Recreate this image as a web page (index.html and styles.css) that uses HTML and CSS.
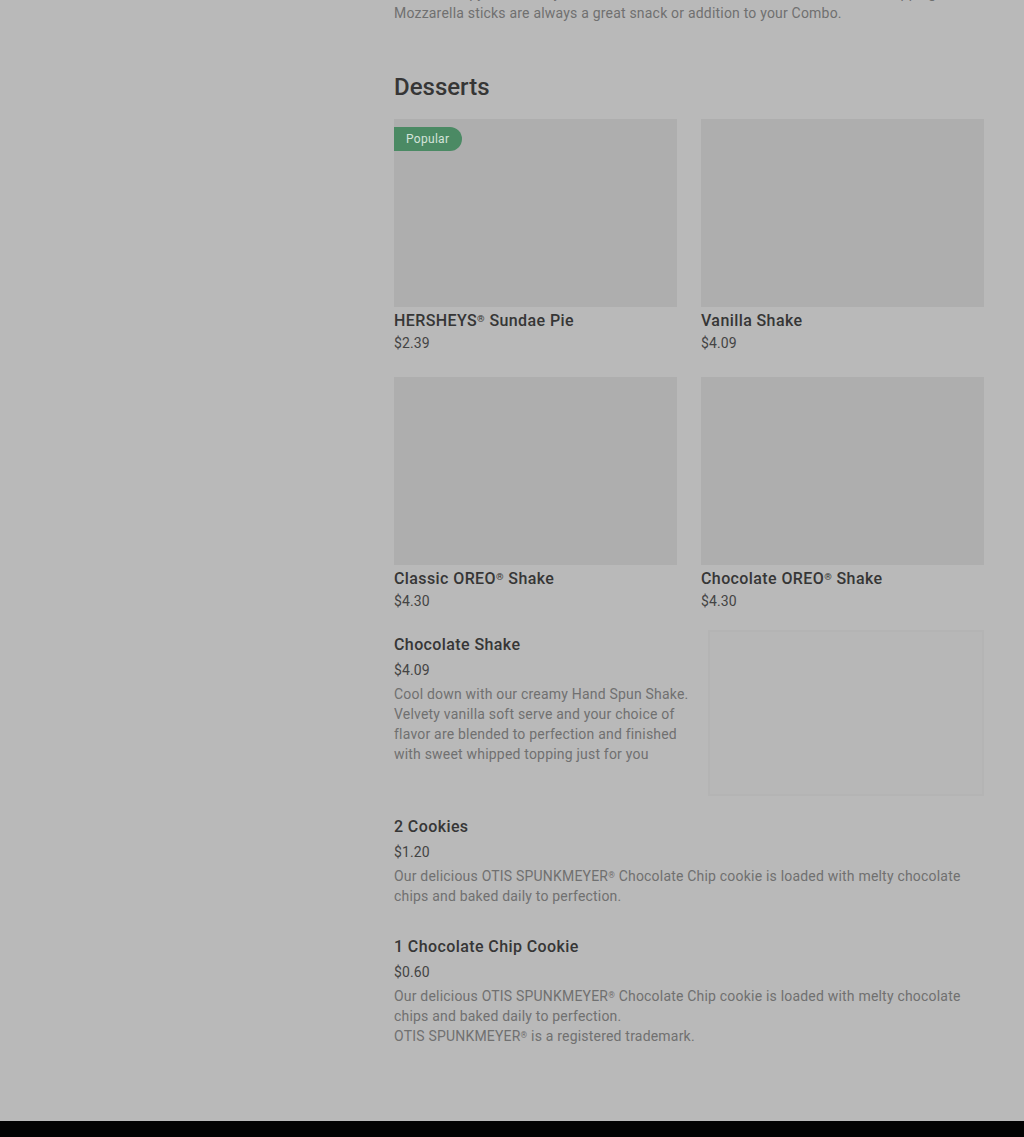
FILE: index.html
```html
<!DOCTYPE html>
<html lang="en">
<head>
    <meta charset="UTF-8">
    <meta name="viewport" content="width=device-width, initial-scale=1.0">
    <title>Menu - Desserts</title>
    <link rel="stylesheet" href="styles.css">
</head>

<body>
    <div class="layout">
        <aside class="sidebar"></aside>

        <main class="menu">
            <div class="prev-item">
                <p class="desc">Golden, crispy and cheesy on the inside, served with a side of warm marinara dipping sauce, Mozzarella sticks are always a great snack or addition to your Combo.</p>
            </div>

            <section class="section">
                <h2 class="section-title">Desserts</h2>

                <div class="card-grid">
                    <div class="card">
                        <div class="card-img">
                            <span class="badge">Popular</span>
                        </div>
                        <h3 class="item-name">HERSHEYS<span class="reg">®</span> Sundae Pie</h3>
                        <div class="price card-price">$2.39</div>
                    </div>
                    <div class="card">
                        <div class="card-img"></div>
                        <h3 class="item-name">Vanilla Shake</h3>
                        <div class="price card-price">$4.09</div>
                    </div>
                    <div class="card">
                        <div class="card-img"></div>
                        <h3 class="item-name">Classic OREO<span class="reg">®</span> Shake</h3>
                        <div class="price card-price">$4.30</div>
                    </div>
                    <div class="card">
                        <div class="card-img"></div>
                        <h3 class="item-name">Chocolate OREO<span class="reg">®</span> Shake</h3>
                        <div class="price card-price">$4.30</div>
                    </div>
                </div>

                <div class="item-list">
                    <div class="item has-image">
                        <div class="item-text">
                            <h3 class="item-name">Chocolate Shake</h3>
                            <div class="price">$4.09</div>
                            <p class="desc">Cool down with our creamy Hand Spun Shake. Velvety vanilla soft serve and your choice of flavor are blended to perfection and finished with sweet whipped topping just for you</p>
                        </div>
                        <div class="item-img"></div>
                    </div>

                    <div class="item">
                        <div class="item-text">
                            <h3 class="item-name">2 Cookies</h3>
                            <div class="price">$1.20</div>
                            <p class="desc">Our delicious OTIS SPUNKMEYER<span class="reg">®</span> Chocolate Chip cookie is loaded with melty chocolate chips and baked daily to perfection.</p>
                        </div>
                    </div>

                    <div class="item">
                        <div class="item-text">
                            <h3 class="item-name">1 Chocolate Chip Cookie</h3>
                            <div class="price">$0.60</div>
                            <p class="desc">Our delicious OTIS SPUNKMEYER<span class="reg">®</span> Chocolate Chip cookie is loaded with melty chocolate chips and baked daily to perfection.<br>OTIS SPUNKMEYER<span class="reg">®</span> is a registered trademark.</p>
                        </div>
                    </div>
                </div>
            </section>
        </main>
    </div>

    <footer class="footer"></footer>
</body>
</html>
```

FILE: styles.css
```css
/* Reset */
* {
    margin: 0;
    padding: 0;
    box-sizing: border-box;
}

body {
    font-family: Roboto, "Liberation Sans", sans-serif;
    background-color: #b9b9b9; /* page under the dimmed overlay */
    color: #363636;
    overflow: hidden;
}

/* Layout */
.layout {
    display: grid;
    grid-template-columns: 394px 590px;
    padding-bottom: 46px;
}

.menu {
    width: 590px;
}

/* previous section, scrolled mostly out of view */
.prev-item {
    margin-top: -17px;
}

.desc {
    font-size: 14px;
    line-height: 20px;
    letter-spacing: 0.2px;
    color: #707070;
}

/* small raised registered mark, kept out of the line box */
.reg {
    position: relative;
    top: -0.4em;
    font-size: 0.6em;
    line-height: 0;
}

/* Section */
.section {
    margin-top: 48px;
}

.section-title {
    font-size: 24px;
    line-height: 32px;
    font-weight: 500;
    color: #363636;
    margin-bottom: 16px;
}

/* Cards */
.card-grid {
    display: grid;
    grid-template-columns: repeat(2, 1fr);
    column-gap: 24px;
    row-gap: 24px;
}

.card-img {
    position: relative;
    height: 188px;
    background-color: #aeaeae;
}

.badge {
    position: absolute;
    top: 8px;
    left: 0;
    height: 24px;
    padding: 0 13px 0 12px;
    line-height: 24px;
    font-size: 12px;
    letter-spacing: 0.3px;
    color: #d4e3da;
    background-color: #4b8a64;
    border-radius: 0 12px 12px 0;
}

.item-name {
    font-size: 16px;
    line-height: 24px;
    font-weight: 500;
    letter-spacing: 0.4px;
    color: #363636;
}

.card .item-name {
    margin-top: 2px;
}

.price {
    font-size: 14px;
    line-height: 20px;
    letter-spacing: 0.1px;
    color: #444;
    margin-top: 3px;
}

.card-price {
    margin-top: 0;
}

/* List items */
.item-list {
    margin-top: 22px;
}

.item {
    display: flex;
    gap: 18px;
    padding-bottom: 29px;
}

.item.has-image {
    padding-bottom: 19px;
}

.item-text {
    flex: 1;
}

.item-text .desc {
    margin-top: 4px;
}

.item-img {
    flex: 0 0 276px;
    height: 166px;
    margin-top: -3px;
    background-color: #b7b7b7;
    border: 2px solid #b4b4b4;
}

/* Footer */
.footer {
    height: 60px;
    background-color: #020202;
}
```
